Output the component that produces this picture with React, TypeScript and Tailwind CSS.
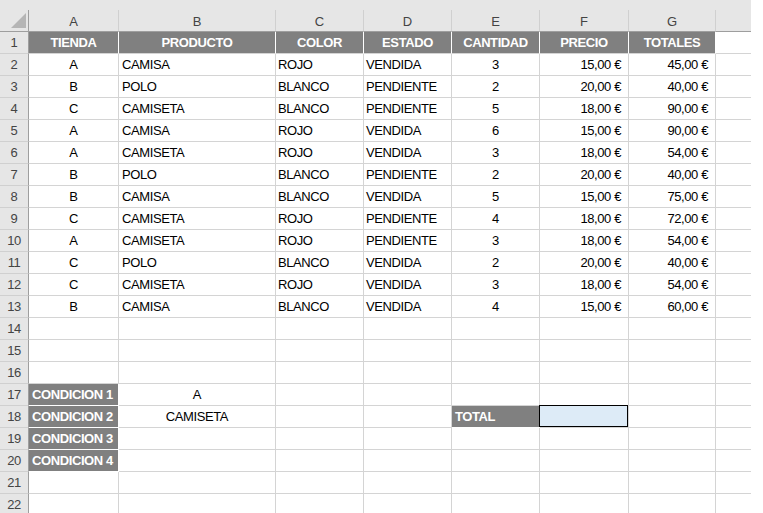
import type { ReactNode } from "react";

// Anchos de columna (incluye el borde derecho de 1px)
const COLS = ["w-[90px]", "w-[157px]", "w-[88px]", "w-[88px]", "w-[88px]", "w-[89px]", "w-[87px]"];
const LETTERS = ["A", "B", "C", "D", "E", "F", "G"];
const HEADERS = ["TIENDA", "PRODUCTO", "COLOR", "ESTADO", "CANTIDAD", "PRECIO", "TOTALES"];

const rows: (string | number)[][] = [
  ["A", "CAMISA", "ROJO", "VENDIDA", 3, "15,00 €", "45,00 €"],
  ["B", "POLO", "BLANCO", "PENDIENTE", 2, "20,00 €", "40,00 €"],
  ["C", "CAMISETA", "BLANCO", "PENDIENTE", 5, "18,00 €", "90,00 €"],
  ["A", "CAMISA", "ROJO", "VENDIDA", 6, "15,00 €", "90,00 €"],
  ["A", "CAMISETA", "ROJO", "VENDIDA", 3, "18,00 €", "54,00 €"],
  ["B", "POLO", "BLANCO", "PENDIENTE", 2, "20,00 €", "40,00 €"],
  ["B", "CAMISA", "BLANCO", "VENDIDA", 5, "15,00 €", "75,00 €"],
  ["C", "CAMISETA", "ROJO", "PENDIENTE", 4, "18,00 €", "72,00 €"],
  ["A", "CAMISETA", "ROJO", "PENDIENTE", 3, "18,00 €", "54,00 €"],
  ["C", "POLO", "BLANCO", "VENDIDA", 2, "20,00 €", "40,00 €"],
  ["C", "CAMISETA", "ROJO", "VENDIDA", 3, "18,00 €", "54,00 €"],
  ["B", "CAMISA", "BLANCO", "VENDIDA", 4, "15,00 €", "60,00 €"],
];

// alineación por columna: A centro, B-D izquierda, E centro, F-G derecha
const ALIGN = [
  "justify-center",
  "justify-start pl-[3px]",
  "justify-start pl-[2px]",
  "justify-start pl-[2px]",
  "justify-center",
  "justify-end pr-[7px]",
  "justify-end pr-[7px]",
];

function RowNum({ n }: { n: number }) {
  return (
    <div className="flex w-[29px] shrink-0 items-center justify-center border-b border-r border-b-[#d0d0d0] border-r-[#9e9e9e] bg-[#e6e6e6] pt-px text-[13px] text-[#444]">
      {n}
    </div>
  );
}

function Cell({ col, children, className = "" }: { col: number; children?: ReactNode; className?: string }) {
  return (
    <div
      className={`relative flex shrink-0 items-center whitespace-nowrap border-b border-r pt-px ${COLS[col]} ${className || "border-[#d4d4d4]"}`}
    >
      {children}
    </div>
  );
}

function Tail() {
  return <div className="w-[35px] shrink-0 border-b border-[#d4d4d4]" />;
}

function EmptyRow({ n, cells = {} }: { n: number; cells?: Record<number, ReactNode> }) {
  return (
    <div className="flex h-[22px]">
      <RowNum n={n} />
      {COLS.map((_, i) => (
        <Cell key={i} col={i}>
          {cells[i]}
        </Cell>
      ))}
      <Tail />
    </div>
  );
}

const gray = "border-b-white border-r-white bg-[#808080] font-bold text-white";

export default function App() {
  return (
    <div className="h-[513px] w-[763px] overflow-hidden bg-white font-['Liberation_Sans',Arial,sans-serif] text-[13px] tracking-[-0.4px] text-black">
      <div className="h-[10px] w-[751px] bg-[#e6e6e6]" />

      {/* Cabecera de columnas */}
      <div className="flex h-[22px] w-[751px] bg-[#e6e6e6]">
        <div className="relative w-[29px] shrink-0 border-b border-r border-[#9e9e9e]">
          <svg className="absolute right-[2px] bottom-[3px]" width="15" height="15" viewBox="0 0 15 15">
            <polygon points="15,0 15,15 0,15" fill="#b5b5b5" />
          </svg>
        </div>
        {LETTERS.map((l, i) => (
          <div
            key={l}
            className={`flex shrink-0 items-center justify-center border-b border-r border-b-[#9e9e9e] border-r-[#d0d0d0] pt-[2px] text-[#444] tracking-normal ${COLS[i]}`}
          >
            {l}
          </div>
        ))}
        <div className="w-[35px] shrink-0 border-b border-[#9e9e9e]" />
      </div>

      {/* Fila 1: encabezados */}
      <div className="flex h-[22px]">
        <RowNum n={1} />
        {HEADERS.map((h, i) => (
          <Cell key={h} col={i} className="justify-center border-b-[#d4d4d4] border-r-white bg-[#808080] font-bold text-white">
            {h}
          </Cell>
        ))}
        <Tail />
      </div>

      {rows.map((r, ri) => (
        <div key={ri} className="flex h-[22px]">
          <RowNum n={ri + 2} />
          {r.map((v, i) => (
            <Cell key={i} col={i} className={`border-[#d4d4d4] ${ALIGN[i]}`}>
              {v}
            </Cell>
          ))}
          <Tail />
        </div>
      ))}

      <EmptyRow n={14} />
      <EmptyRow n={15} />
      <EmptyRow n={16} />

      {/* Condiciones */}
      {[17, 18, 19, 20].map((n) => (
        <div key={n} className="flex h-[22px]">
          <RowNum n={n} />
          <Cell col={0} className={`pl-[3px] ${gray} ${n === 20 ? "border-b-[#d4d4d4]" : ""} border-r-[#d4d4d4]`}>
            CONDICION {n - 16}
          </Cell>
          <Cell col={1} className="justify-center border-[#d4d4d4]">
            {n === 17 ? "A" : n === 18 ? "CAMISETA" : null}
          </Cell>
          <Cell col={2} />
          <Cell col={3} />
          {n === 18 ? (
            <>
              <Cell col={4} className={`pl-[3px] ${gray}`}>
                TOTAL
              </Cell>
              <Cell col={5} className="border-[#d4d4d4] bg-[#ddebf7]">
                <div className="absolute -top-px -left-px right-0 bottom-0 border border-black" />
              </Cell>
            </>
          ) : (
            <>
              <Cell col={4} />
              <Cell col={5} />
            </>
          )}
          <Cell col={6} />
          <Tail />
        </div>
      ))}

      <EmptyRow n={21} />
      <EmptyRow n={22} />
    </div>
  );
}
